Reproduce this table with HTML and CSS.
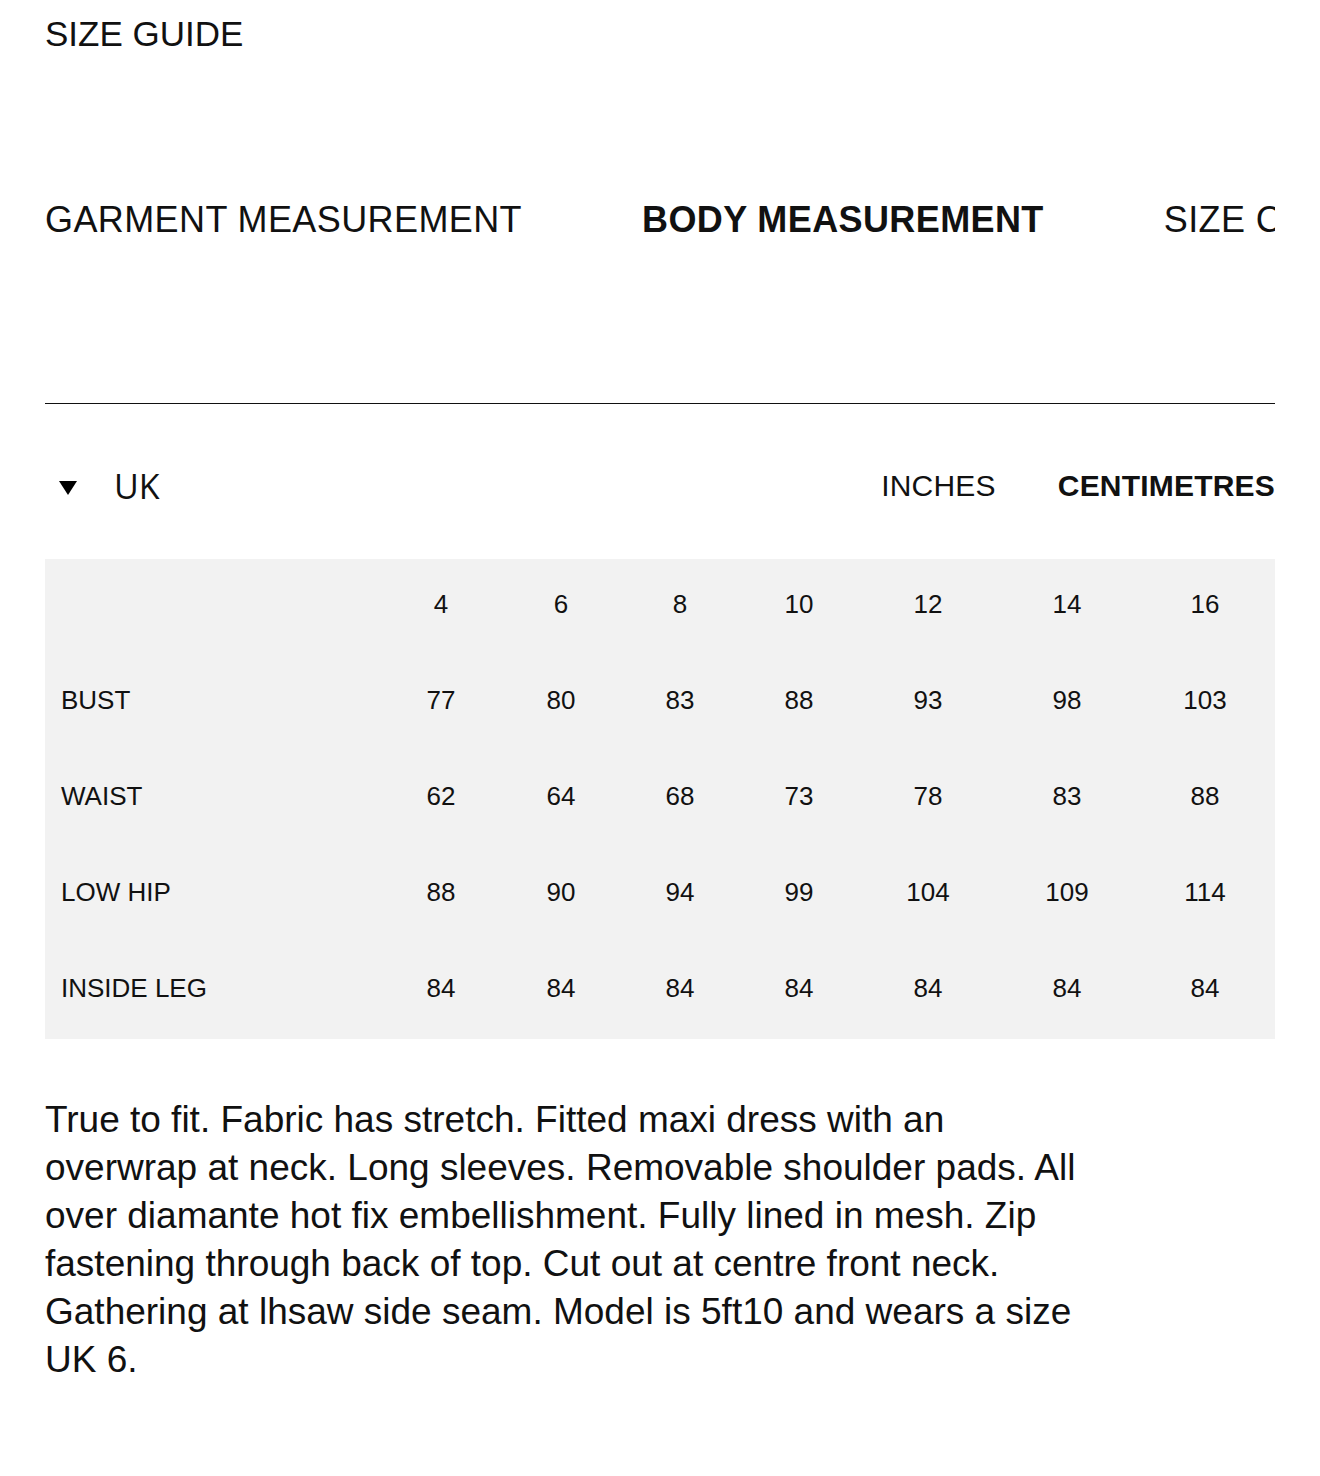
FILE: index.html
```html
<!DOCTYPE html>
<html lang="en">
<head>
<meta charset="utf-8">
<title>Size Guide</title>
<link rel="stylesheet" href="styles.css">
</head>
<body>
<div class="page">
  <h1 class="title">SIZE GUIDE</h1>

  <nav class="tabs">
    <span class="tab">GARMENT MEASUREMENT</span>
    <span class="tab tab-active">BODY MEASUREMENT</span>
    <span class="tab">SIZE CONVERSION</span>
  </nav>

  <hr class="divider">

  <div class="unit-row">
    <div class="region">
      <svg class="caret" width="18" height="14" viewBox="0 0 18 14" aria-hidden="true"><polygon points="0,0 18,0 9,14" fill="#000"/></svg>
      <span class="region-name">UK</span>
    </div>
    <div class="units">
      <span class="unit">INCHES</span>
      <span class="unit unit-active">CENTIMETRES</span>
    </div>
  </div>

  <div class="size-table">
    <div class="cell label"></div>
    <div class="cell">4</div><div class="cell">6</div><div class="cell">8</div><div class="cell">10</div><div class="cell">12</div><div class="cell">14</div><div class="cell">16</div>

    <div class="cell label">BUST</div>
    <div class="cell">77</div><div class="cell">80</div><div class="cell">83</div><div class="cell">88</div><div class="cell">93</div><div class="cell">98</div><div class="cell">103</div>

    <div class="cell label">WAIST</div>
    <div class="cell">62</div><div class="cell">64</div><div class="cell">68</div><div class="cell">73</div><div class="cell">78</div><div class="cell">83</div><div class="cell">88</div>

    <div class="cell label">LOW HIP</div>
    <div class="cell">88</div><div class="cell">90</div><div class="cell">94</div><div class="cell">99</div><div class="cell">104</div><div class="cell">109</div><div class="cell">114</div>

    <div class="cell label">INSIDE LEG</div>
    <div class="cell">84</div><div class="cell">84</div><div class="cell">84</div><div class="cell">84</div><div class="cell">84</div><div class="cell">84</div><div class="cell">84</div>
  </div>

  <p class="description">True to fit. Fabric has stretch. Fitted maxi dress with an overwrap at neck. Long sleeves. Removable shoulder pads. All over diamante hot fix embellishment. Fully lined in mesh. Zip fastening through back of top. Cut out at centre front neck. Gathering at lhsaw side seam. Model is 5ft10 and wears a size UK 6.</p>
</div>
</body>
</html>
```

FILE: styles.css
```css
html, body {
  margin: 0;
  padding: 0;
  background: #ffffff;
}

body {
  font-family: "Liberation Sans", Arial, sans-serif;
  color: #111111;
}

.page {
  padding: 0 45px 60px;
}

.title {
  margin: 0;
  padding-top: 14px;
  font-size: 35px;
  font-weight: 400;
  line-height: 40px;
}

.tabs {
  margin-top: 144px;
  display: flex;
  gap: 120px;
  overflow: hidden;
  white-space: nowrap;
  font-size: 36px;
  line-height: 44px;
  letter-spacing: 0.4px;
}

.tab {
  flex: none;
  font-weight: 400;
}

.tab-active {
  font-weight: 700;
}

.divider {
  margin: 161px 0 0;
  border: 0;
  border-top: 1px solid #111111;
  height: 0;
}

.unit-row {
  margin-top: 60px;
  height: 44px;
  display: flex;
  align-items: center;
  justify-content: space-between;
}

.region {
  display: flex;
  align-items: center;
  padding-left: 14px;
}

.caret {
  display: block;
  margin-top: 3px;
}

.region-name {
  margin-left: 37px;
  font-family: "Open Sans", "Noto Sans", sans-serif;
  font-size: 34px;
  line-height: 44px;
}

.units {
  display: flex;
  gap: 62px;
  font-size: 30px;
  line-height: 44px;
  letter-spacing: 0.2px;
}

.unit-active {
  font-weight: 700;
}

.size-table {
  margin-top: 51px;
  background: #f2f2f2;
  display: grid;
  grid-template-columns: 334px 124px 116px 122px 116px 142px 136px 140px;
  grid-auto-rows: 96px;
  font-size: 26px;
}

.cell {
  display: flex;
  align-items: center;
  justify-content: center;
  padding-bottom: 6px;
}

.cell.label {
  justify-content: flex-start;
  padding-left: 16px;
}

.description {
  margin: 57px 0 0;
  width: 1048px;
  font-size: 37px;
  line-height: 48px;
}
```
